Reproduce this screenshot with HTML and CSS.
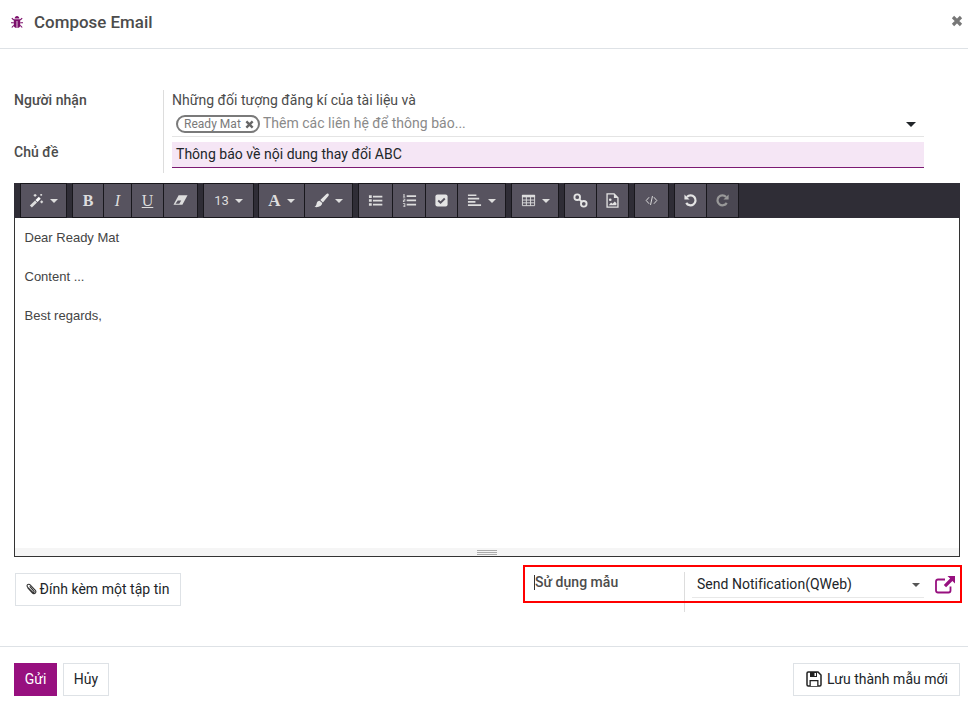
FILE: index.html
```html
<!DOCTYPE html>
<html lang="vi">
<head>
<meta charset="utf-8">
<title>Compose Email</title>
<link rel="stylesheet" href="styles.css">
</head>
<body>
<svg class="defs" width="0" height="0" aria-hidden="true">
  <symbol id="caret" viewBox="0 0 8 4"><path d="M0 0h8L4 4z" fill="currentColor"/></symbol>
</svg>
<div class="modal">
  <header class="head">
    <svg class="bug" viewBox="0 0 14 14"><path fill="#7c0f6c" d="M4.600 3.400C4.800 1.900 5.700 1 7 1s2.200.9 2.400 2.400zM3.800 4.200h6.400v6c0 1.700-1.200 2.800-2.800 2.800V6h-.8v7c-1.600 0-2.800-1.100-2.800-2.800z"/><path stroke="#7c0f6c" stroke-width="1.100" fill="none" d="M3.800 5 1.800 3.200M10.200 5l2-1.800M3.800 7.700H1M10.200 7.700H13M3.800 10.300 1.800 12.500M10.200 10.300l2 2.200"/></svg>
    <h1 class="title">Compose Email</h1>
    <svg class="close" viewBox="0 0 12 12"><path d="M2 2l8 8M10 2l-8 8" stroke="#777" stroke-width="3.200" fill="none"/></svg>
  </header>

  <section class="fields">
    <div class="labels">
      <div class="label">Người nhận</div>
      <div class="label label-subject">Chủ đề</div>
    </div>
    <div class="inputs">
      <div class="followers">Những đối tượng đăng kí của tài liệu và</div>
      <div class="recipients">
        <span class="tag">Ready Mat
          <svg class="tag-x" viewBox="0 0 10 10"><path d="M1.500 1.500l7 7M8.500 1.500l-7 7" stroke="#666" stroke-width="2.600" fill="none"/></svg>
        </span>
        <span class="placeholder">Thêm các liên hệ để thông báo...</span>
        <svg class="caret-dark"><use href="#caret"/></svg>
      </div>
      <div class="subject">Thông báo về nội dung thay đổi ABC</div>
    </div>
  </section>

  <section class="editor">
    <div class="toolbar">
      <div class="group">
        <button class="btn w45">
          <svg class="ico" viewBox="0 0 16 16"><path stroke="#ddd" stroke-width="3" d="M2 14.500 7.500 9"/><path stroke="#fff" stroke-width="3" d="M8 8.500 11.500 5"/><path stroke="#ddd" stroke-width="1.300" d="M6.500 1v3M5 2.500h3M13.500 8v3M12 9.500h3M13 1v2M12 2h2"/></svg>
          <svg class="caret"><use href="#caret"/></svg>
        </button>
      </div>
      <div class="group">
        <button class="btn w30 serif bold">B</button>
        <button class="btn w27 serif italic">I</button>
        <button class="btn w31 serif under">U</button>
        <button class="btn w33"><svg class="ico" viewBox="0 0 16 16"><path fill="#ddd" d="M6 2.500h9.500L10 12.500H0.500z"/><path fill="#57535f" d="M2.700 11.500 5 8h3.700L6.700 11.500z"/></svg></button>
      </div>
      <div class="group">
        <button class="btn w49 num">13<svg class="caret"><use href="#caret"/></svg></button>
      </div>
      <div class="group tight">
        <button class="btn w45 serif bold big">A<svg class="caret"><use href="#caret"/></svg></button>
        <button class="btn w47"><svg class="ico" viewBox="0 0 16 16"><path fill="#e4e4e4" d="M15.300.8c.8.600.5 1.600 0 2.300L9.500 10 6.700 7.400 13 1.200c.7-.6 1.500-.9 2.300-.4zM6 8.200l2.800 2.500C8.500 14 5.300 15.600.5 15c1.700-1.200 2-2.300 2.300-3.700C3 9.500 4.300 8.300 6 8.200z"/></svg><svg class="caret"><use href="#caret"/></svg></button>
      </div>
      <div class="group">
        <button class="btn w33"><svg class="ico" viewBox="0 0 16 16"><path fill="#ddd" d="M1 2.500h3v2.700H1zM1 6.700h3v2.700H1zM1 10.900h3v2.700H1zM5.300 3h10v1.800H5.300zM5.300 7.200h10V9H5.300zM5.300 11.400h10v1.800H5.300z"/></svg></button>
        <button class="btn w32"><svg class="ico" viewBox="0 0 16 16"><path fill="#ddd" d="M5 2.500h10v1.800H5zM5 7h10v1.800H5zM5 11.500h10v1.800H5zM1.500 1h1.200v3H3.500v.7h-2.500v-.7h.6zM1 6h2.500v2.200H2v.8h1.500v.6H1V7.600h1.500v-.9H1zM1 11h2.500v4H1v-.7h1.600v-.6H1.400V13h1.200v-1.300H1z"/></svg></button>
        <button class="btn w31"><svg class="ico" viewBox="0 0 16 16"><rect x="1.500" y="1.500" width="13" height="13" rx="2.200" fill="#e4e4e4"/><path d="M4.500 8 7 10.400l4.500-4.500" stroke="#57535f" stroke-width="2" fill="none"/></svg></button>
        <button class="btn w47"><svg class="ico" viewBox="0 0 16 16"><path fill="#ddd" d="M1 1.500h9v1.800H1zM1 5h12v1.800H1zM1 8.500h8v1.800H1zM1 12h14v1.800H1z"/></svg><svg class="caret"><use href="#caret"/></svg></button>
      </div>
      <div class="group">
        <button class="btn w46"><svg class="ico" viewBox="0 0 16 16"><path fill="none" stroke="#ddd" d="M1.500 2.500h13v11h-13z"/><path fill="#ddd" d="M1 2h14v2.600H1z"/><path stroke="#ddd" d="M1.500 7.500h13M1.500 10.500h13M5.700 4v9.500M10.200 4v9.500"/></svg><svg class="caret"><use href="#caret"/></svg></button>
      </div>
      <div class="group">
        <button class="btn w31"><svg class="ico" viewBox="0 0 16 16"><circle cx="4.500" cy="4.500" r="3" fill="none" stroke="#e4e4e4" stroke-width="2"/><circle cx="11.500" cy="11.500" r="3" fill="none" stroke="#e4e4e4" stroke-width="2"/><path stroke="#e4e4e4" stroke-width="2" d="M6.500 6.500l3 3"/></svg></button>
        <button class="btn w31"><svg class="ico" viewBox="0 0 16 16"><path fill="none" stroke="#e4e4e4" stroke-width="1.400" d="M2.200 1h7.500l4.100 4.100V15H2.200z"/><path fill="#e4e4e4" d="M9.500 1.200v4h4zM4 13l2.500-3 1.500 1.500 2.500-2.500 1.700 2V13z"/><circle cx="5.600" cy="7.200" r="1.400" fill="#e4e4e4"/></svg></button>
      </div>
      <div class="group">
        <button class="btn w33"><svg class="ico small" viewBox="0 0 16 16"><path fill="none" stroke="#ddd" stroke-width="1.200" d="M5 4 1.500 8 5 12M11 4l3.500 4L11 12M9.200 2.500l-2.400 11"/></svg></button>
      </div>
      <div class="group">
        <button class="btn w31"><svg class="ico" viewBox="0 0 16 16"><path fill="none" stroke="#e4e4e4" stroke-width="2.400" d="M4.200 4.200a5.300 5.300 0 1 1-.7 6.300"/><path fill="#e4e4e4" d="M1.500 1.500v5.500H7z"/></svg></button>
        <button class="btn w31 off"><svg class="ico" viewBox="0 0 16 16"><path fill="none" stroke="#999" stroke-width="2.400" d="M11.800 4.200a5.300 5.300 0 1 0 .7 6.300"/><path fill="#999" d="M14.500 1.500v5.500H9z"/></svg></button>
      </div>
    </div>
    <div class="body">
      <p>Dear Ready Mat</p>
      <p>Content ...</p>
      <p>Best regards,</p>
    </div>
    <div class="resizer"><span class="grip"></span></div>
  </section>

  <section class="extras">
    <button class="plain attach">
      <svg class="clip" viewBox="0 0 14 14"><path fill="none" stroke="#333" stroke-width="1.300" d="M3 5.500l5.500 6c1 1.100 2.600 1.200 3.500.3s.8-2.300-.2-3.400L6 2.200C5.100 1.300 3.900 1.100 3 2s-.7 2.100.2 3l5.700 5.800c.5.500 1.200.5 1.600.1s.3-1-.2-1.500L5.500 4"/></svg>
      Đính kèm một tập tin
    </button>
    <div class="template">
      <div class="tpl-label">Sử dụng mẫu</div>
      <div class="tpl-value">
        <div class="tpl-select">Send Notification(QWeb)<svg class="caret-grey"><use href="#caret"/></svg></div>
        <svg class="ext" viewBox="0 0 20 18"><path fill="none" stroke="#97107f" stroke-width="1.800" d="M15.500 10.500v4c0 1.300-.8 2-2 2H3c-1.200 0-2-.7-2-2V5.500c0-1.300.8-2 2-2h7"/><path fill="#97107f" d="M12.500 0H20v7.500l-2.600-2.600-6.300 6.300-2.300-2.300 6.300-6.300z"/></svg>
      </div>
      <div class="highlight"></div>
    </div>
  </section>

  <footer class="foot">
    <button class="send">Gửi</button>
    <button class="plain cancel">Hủy</button>
    <button class="plain save">
      <svg class="floppy" viewBox="0 0 16 16"><path fill="none" stroke="#222" stroke-width="1.500" d="M1 2.200C1 1.500 1.500 1 2.200 1h9.800L15 4v9.800c0 .7-.5 1.200-1.200 1.200H2.200C1.500 15 1 14.500 1 13.800z"/><path fill="#222" d="M4 1h7v5H4zM3.500 9h9v6h-9z"/><path fill="#fff" d="M8.500 2h1.500v3H8.500zM4.800 10.200h6.400V15H4.800z"/></svg>
      Lưu thành mẫu mới
    </button>
  </footer>
</div>
</body>
</html>
```

FILE: styles.css
```css
* { box-sizing: border-box; }
html, body { margin: 0; padding: 0; background: #fff; }
body { font-family: Roboto, "Noto Sans", sans-serif; font-size: 14px; color: #212529; letter-spacing: .025px; }
.defs { position: absolute; }
.modal { width: 968px; height: 709px; display: flex; flex-direction: column; overflow: hidden; }

.head { height: 49px; flex: none; display: flex; align-items: center; padding: 0 5px 4px 10px; border-bottom: 1px solid #dee2e6; }
.bug { width: 14px; height: 14px; flex: none; }
.title { margin: 0 0 0 10px; font-size: 16.900px; font-weight: 500; color: #4c4c4c; flex: 1; }
.close { width: 12px; height: 12px; margin-bottom: 3px; }

.fields { display: flex; height: 83px; margin: 41px 44px 0 14px; flex: none; }
.labels { width: 150px; flex: none; border-right: 1px solid #ddd; font-weight: 500; color: #4c4c4c; }
.label { line-height: 20px; }
.label-subject { margin-top: 32px; }
.inputs { flex: 1; padding-left: 8px; min-width: 0; }
.followers { height: 21px; line-height: 20px; color: #4c4c4c; }
.recipients { height: 26px; display: flex; align-items: center; border-bottom: 1px solid #e4e4e4; padding: 0 0 1px 4px; }
.tag { height: 18px; margin-top: 2px; display: inline-flex; align-items: center; gap: 4px; border: 2px solid #7a7a7a; border-radius: 9px; padding: 0 4px 0 6px; font-size: 12px; color: #7a7a7a; }
.tag-x { width: 9px; height: 9px; }
.placeholder { margin-left: 3px; color: #8a8a8a; flex: 1; }
.caret-dark { width: 10px; height: 5px; color: #212529; margin-right: 8px; margin-top: 3px; }
.subject { height: 26px; margin-top: 5px; background: #f5e6f5; border-bottom: 1px solid #7c1a72; padding-left: 4px; line-height: 24px; color: #212529; }

.editor { height: 374px; margin: 10px 8px 0 14px; flex: none; border: 1px solid #333; border-top: 0; display: flex; flex-direction: column; }
.toolbar { height: 35px; flex: none; margin: 0 -1px; background: #2f2d36; padding: 1px 0 1px 7px; display: flex; gap: 7px; }
.group { display: flex; gap: 1px; }
.tight { margin-left: -1px; }
.btn { height: 33px; padding: 0; border: 0; background: #57535f; box-shadow: 0 0 0 1px #18171c; color: #ddd; display: flex; align-items: center; justify-content: center; gap: 6px; font-family: "Liberation Sans", sans-serif; font-size: 13px; }
.w27 { width: 27px; } .w30 { width: 30px; } .w31 { width: 31px; } .w32 { width: 32px; } .w33 { width: 33px; }
.w45 { width: 45px; } .w46 { width: 46px; } .w47 { width: 47px; } .w49 { width: 49px; }
.serif { font-family: "Liberation Serif", serif; font-size: 16px; }
.bold { font-weight: 700; }
.italic { font-style: italic; }
.under { text-decoration: underline; }
.big { font-size: 17px; }
.num { font-size: 13px; font-family: Roboto, sans-serif; }
.off { background: #4a4752; }
.ico { width: 15px; height: 15px; flex: none; }
.ico.small { width: 13px; height: 13px; }
.caret { width: 8px; height: 4px; color: #ddd; flex: none; }
.body { flex: 1; padding: 10px 10px 0 9.500px; font-family: "Liberation Sans", sans-serif; font-size: 13px; line-height: 19.500px; color: #444; letter-spacing: 0; }
.body p { margin: 0 0 19.500px; }
.resizer { height: 8px; flex: none; background: #f5f5f5; display: flex; justify-content: center; align-items: center; }
.grip { width: 20px; height: 5px; border-top: 1px solid #aaa; border-bottom: 1px solid #aaa; background: linear-gradient(#aaa, #aaa) center / 100% 1px no-repeat; }

.plain { border: 1px solid #dee2e6; background: #fff; height: 33px; padding: 0 0 2px; font-family: inherit; font-size: 14px; letter-spacing: inherit; color: #212529; display: inline-flex; align-items: center; justify-content: center; }
.extras { height: 89px; flex: none; position: relative; display: flex; justify-content: space-between; padding-left: 15px; }
.attach { width: 166px; margin-top: 16px; gap: 3px; padding-right: 2px; }
.clip { width: 12px; height: 14px; }
.template { width: 439px; margin-top: 8px; height: 47px; margin-right: 6px; position: relative; display: flex; }
.tpl-label { position: relative; width: 162px; margin-top: 7px; padding: 2px 0 0 12px; line-height: 16px; font-weight: 500; color: #4c4c4c; border-right: 1px solid #ddd; }
.tpl-label::before { content: ""; position: absolute; left: 11px; top: 3px; width: 1px; height: 15px; background: #333; }
.tpl-value { flex: 1; display: flex; align-items: flex-start; padding: 9px 0 0 7px; }
.tpl-select { width: 232px; height: 25px; border-bottom: 1px solid #e8e8e8; display: flex; justify-content: space-between; align-items: center; padding: 0 3px 2px 5px; margin-top: -1px; color: #212529; }
.caret-grey { width: 10px; height: 4px; color: #555; margin-top: 1px; }
.ext { width: 20px; height: 18px; margin-left: 11px; margin-top: 2px; flex: none; }
.highlight { position: absolute; left: 0; top: 0; width: 439px; height: 38px; border: 2px solid #f00; pointer-events: none; }

.foot { flex: 1; border-top: 1px solid #dee2e6; display: flex; align-items: flex-start; gap: 6px; padding: 16px 8px 0 14px; }
.send { width: 43px; height: 33px; border: 0; padding: 0 0 2px; background: #97107f; color: #fff; font-family: inherit; font-size: 14px; letter-spacing: inherit; }
.cancel { width: 46px; }
.save { width: 167px; margin-left: auto; gap: 5px; padding-left: 1px; }
.floppy { width: 16px; height: 16px; }
```
